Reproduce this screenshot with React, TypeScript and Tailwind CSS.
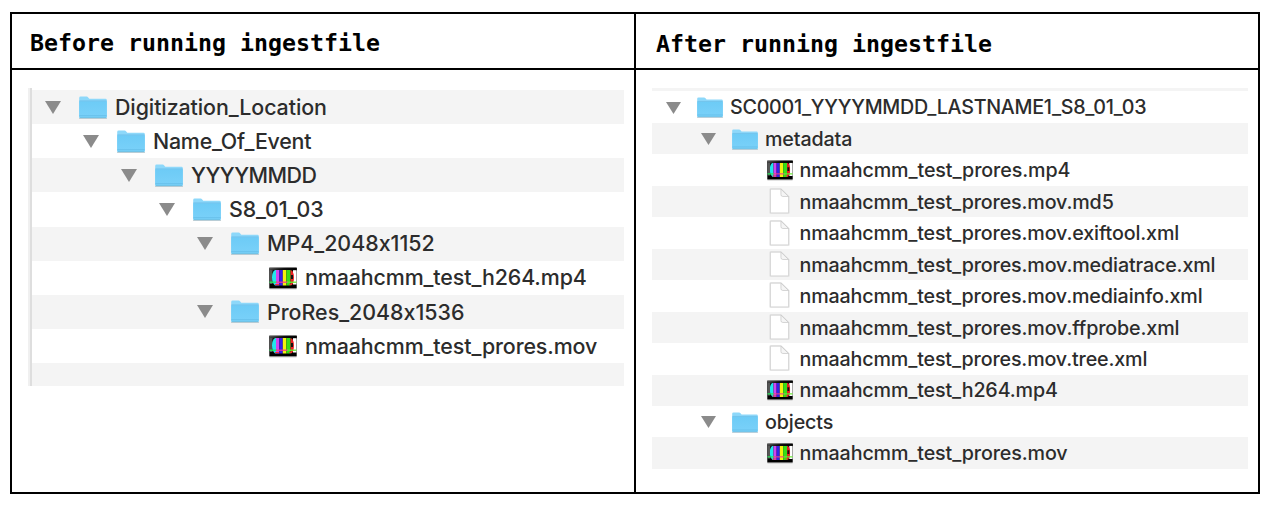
type Kind = "folder" | "video" | "file";
type Row = { name: string; kind: Kind; indent: string; tracking: string };

function FolderIcon({ className }: { className: string }) {
  return (
    <svg viewBox="0 0 28 23" preserveAspectRatio="none" className={className}>
      <defs>
        <linearGradient id="folder" x1="0" y1="0" x2="0" y2="1">
          <stop offset="0" stopColor="#6dcbf6" />
          <stop offset="1" stopColor="#7ad1f9" />
        </linearGradient>
      </defs>
      <path d="M0 22.5h28" stroke="#b8c5cc" strokeWidth="0.8" />
      <path d="M.2 20.5V2Q.2.6 1.6.6H7.6Q8.5.6 9.2 1.4L10.3 2.8H26.5Q27.8 2.8 27.8 4.2V20.5Q27.8 22 26.5 22H1.5Q.2 22 .2 20.5Z" fill="#8dd8fa" />
      <path d="M.2 5.3H27.8V20.5Q27.8 22 26.5 22H1.5Q.2 22 .2 20.5Z" fill="url(#folder)" />
      <path d="M.4 4.9H27.6" stroke="#68bce6" strokeWidth="0.7" />
      <path d="M.4 19.7H27.6" stroke="#60b9e4" strokeWidth="0.7" />
      <path d="M.8 21.7H27.2" stroke="#6bb9da" strokeWidth="0.7" />
    </svg>
  );
}

function VideoIcon({ className }: { className: string }) {
  return (
    <svg viewBox="0 0 28 23" preserveAspectRatio="none" className={className}>
      <defs>
        <linearGradient id="glare" x1="0" y1="0" x2="1" y2="0.4">
          <stop offset="0" stopColor="#666" />
          <stop offset="0.55" stopColor="#111" />
          <stop offset="1" stopColor="#000" />
        </linearGradient>
        <clipPath id="screen">
          <path d="M6 3H22Q25 5 25 10.5Q25 17 22 18.5H6Q3 16 3 10.5Q3 5 6 3Z" />
        </clipPath>
      </defs>
      <path d="M.5 21.8H27.5" stroke="#b3b3b3" strokeWidth="1" />
      <rect x=".3" y=".7" width="27.4" height="20.6" fill="#000" />
      <rect x=".3" y=".7" width="27.4" height="3" fill="url(#glare)" />
      <rect x=".5" y="3" width="3" height="14" fill="#555" />
      <rect x="24" y="3.2" width="3.5" height="14.3" fill="#fff" />
      <g clipPath="url(#screen)">
        <rect x="3" y="3" width="4" height="16" fill="#20e6ec" />
        <rect x="7" y="3" width="3.4" height="16" fill="#d044ef" />
        <rect x="10.4" y="3" width="3.4" height="16" fill="#3520e9" />
        <rect x="13.8" y="3" width="3.6" height="16" fill="#f5ef10" />
        <rect x="17.4" y="3" width="4.2" height="16" fill="#37dd18" />
        <rect x="21.6" y="3" width="4" height="16" fill="#ed2025" />
        <path d="M23 8V12" stroke="#111" strokeWidth="2" />
      </g>
      <path d="M.5 15.2H8" stroke="#23ea59" strokeWidth="1.3" />
      <path d="M7 15.2H19" stroke="#f33b8b" strokeWidth="1.2" />
      <path d="M18 15.2H27.5" stroke="#65ec30" strokeWidth="1.3" />
      <path d="M6 17.5H10M20 17.5H23" stroke="#ef3535" strokeWidth="1" />
    </svg>
  );
}

function FileIcon({ className }: { className: string }) {
  return (
    <svg viewBox="0 0 22 28" preserveAspectRatio="none" className={className}>
      <path d="M1.5 1.2H12.5L20.5 9V25.8H1.5Z" fill="none" stroke="#e3e3e3" strokeWidth="2" strokeLinejoin="round" />
      <path d="M1.5 1.2H12.5L20.5 9V25.8H1.5Z" fill="#fff" stroke="#cdcdcd" strokeWidth=".8" />
      <path d="M12.5 1.2V6.8Q12.5 8.8 14.5 8.8H20.5Z" fill="#f5f5f5" stroke="#c8c8c8" strokeWidth=".8" />
    </svg>
  );
}

function Triangle({ className }: { className: string }) {
  return (
    <svg viewBox="0 0 16 13" preserveAspectRatio="none" className={className}>
      <path d="M0 0H16L8 13Z" fill="#8b8b8b" />
    </svg>
  );
}

const before: Row[] = [
  { name: "Digitization_Location", kind: "folder", indent: "pl-[13px]", tracking: "tracking-[-0.08px]" },
  { name: "Name_Of_Event", kind: "folder", indent: "pl-[51px]", tracking: "tracking-[-0.23px]" },
  { name: "YYYYMMDD", kind: "folder", indent: "pl-[89px]", tracking: "tracking-[-0.5px]" },
  { name: "S8_01_03", kind: "folder", indent: "pl-[127px]", tracking: "tracking-[-0.08px]" },
  { name: "MP4_2048x1152", kind: "folder", indent: "pl-[165px]", tracking: "tracking-normal" },
  { name: "nmaahcmm_test_h264.mp4", kind: "video", indent: "pl-[203px]", tracking: "tracking-[-0.1px]" },
  { name: "ProRes_2048x1536", kind: "folder", indent: "pl-[165px]", tracking: "tracking-normal" },
  { name: "nmaahcmm_test_prores.mov", kind: "video", indent: "pl-[203px]", tracking: "tracking-[-0.1px]" },
];

const after: Row[] = [
  { name: "SC0001_YYYYMMDD_LASTNAME1_S8_01_03", kind: "folder", indent: "pl-[14px]", tracking: "tracking-[-0.26px]" },
  { name: "metadata", kind: "folder", indent: "pl-[49px]", tracking: "tracking-[-0.14px]" },
  { name: "nmaahcmm_test_prores.mp4", kind: "video", indent: "pl-[83.5px]", tracking: "tracking-[-0.11px]" },
  { name: "nmaahcmm_test_prores.mov.md5", kind: "file", indent: "pl-[83.5px]", tracking: "tracking-[-0.14px]" },
  { name: "nmaahcmm_test_prores.mov.exiftool.xml", kind: "file", indent: "pl-[83.5px]", tracking: "tracking-[-0.14px]" },
  { name: "nmaahcmm_test_prores.mov.mediatrace.xml", kind: "file", indent: "pl-[83.5px]", tracking: "tracking-[-0.14px]" },
  { name: "nmaahcmm_test_prores.mov.mediainfo.xml", kind: "file", indent: "pl-[83.5px]", tracking: "tracking-[-0.15px]" },
  { name: "nmaahcmm_test_prores.mov.ffprobe.xml", kind: "file", indent: "pl-[83.5px]", tracking: "tracking-[-0.14px]" },
  { name: "nmaahcmm_test_prores.mov.tree.xml", kind: "file", indent: "pl-[83.5px]", tracking: "tracking-[-0.15px]" },
  { name: "nmaahcmm_test_h264.mp4", kind: "video", indent: "pl-[83.5px]", tracking: "tracking-[-0.14px]" },
  { name: "objects", kind: "folder", indent: "pl-[49px]", tracking: "tracking-[-0.12px]" },
  { name: "nmaahcmm_test_prores.mov", kind: "video", indent: "pl-[83.5px]", tracking: "tracking-[-0.13px]" },
];

function LargeRow({ row }: { row: Row }) {
  return (
    <div className={`flex h-[34.125px] items-center odd:bg-[#f4f4f4] ${row.indent}`}>
      <span className="w-[34px] shrink-0">
        {row.kind === "folder" && <Triangle className="h-[13px] w-[16px]" />}
      </span>
      {row.kind === "folder" ? <FolderIcon className="h-[23px] w-[28px] shrink-0" /> : <VideoIcon className="mt-[2px] h-[23px] w-[28px] shrink-0" />}
      <span className={`ml-[8px] mt-px whitespace-nowrap text-[21.4px] leading-none ${row.tracking}`}>{row.name}</span>
    </div>
  );
}

function SmallRow({ row }: { row: Row }) {
  return (
    <div className={`flex h-[31.46px] items-center even:bg-[#f4f4f4] ${row.indent}`}>
      <span className="w-[31px] shrink-0">
        {row.kind === "folder" && <Triangle className="mt-px h-[12px] w-[15px]" />}
      </span>
      <span className="flex w-[26px] shrink-0 justify-center">
        {row.kind === "folder" && <FolderIcon className="mt-px h-[21px] w-[26px]" />}
        {row.kind === "video" && <VideoIcon className="mt-px h-[21px] w-[26px]" />}
        {row.kind === "file" && <FileIcon className="mr-px h-[27px] w-[21px]" />}
      </span>
      <span className={`ml-[7px] mt-[2px] whitespace-nowrap text-[19.7px] leading-none ${row.tracking}`}>{row.name}</span>
    </div>
  );
}

export default function App() {
  return (
    <div className="h-[506px] w-[1270px] bg-white pl-[10px] pt-[12px] font-['Inter',sans-serif] font-[450] text-[#2c2c2c] [font-feature-settings:'calt'_0]">
      <div className="grid h-[482px] w-[1250px] grid-cols-[624px_622px] grid-rows-[56px_422px] gap-0 border-2 border-black">
        <h2 className="border-b-2 border-r-2 border-black pl-[18px] pt-[15px] font-['DejaVu_Sans_Mono',monospace] text-[23.25px] font-bold leading-[27px] text-black">
          Before running ingestfile
        </h2>
        <h2 className="border-b-2 border-black pl-[20px] pt-[16px] font-['DejaVu_Sans_Mono',monospace] text-[23.25px] font-bold leading-[27px] text-black">
          After running ingestfile
        </h2>
        <section className="border-r-2 border-black pl-[16px] pt-[18px]">
          <div className="h-[298px] w-[596px] border-l-2 border-[#f0f0f0]">
            <div className="h-full border-l-2 border-[#dedede] pt-[2px]">
              {before.map((row) => <LargeRow key={row.name} row={row} />)}
              <div className="h-[23px] bg-[#f4f4f4]" />
            </div>
          </div>
        </section>
        <section className="pl-[16px] pt-[18px]">
          <div className="w-[596px]">
            <div className="h-[3px] bg-[#f4f4f4]" />
            <div className="pt-[0.5px]">
              {after.map((row) => <SmallRow key={row.name} row={row} />)}
            </div>
          </div>
        </section>
      </div>
    </div>
  );
}
